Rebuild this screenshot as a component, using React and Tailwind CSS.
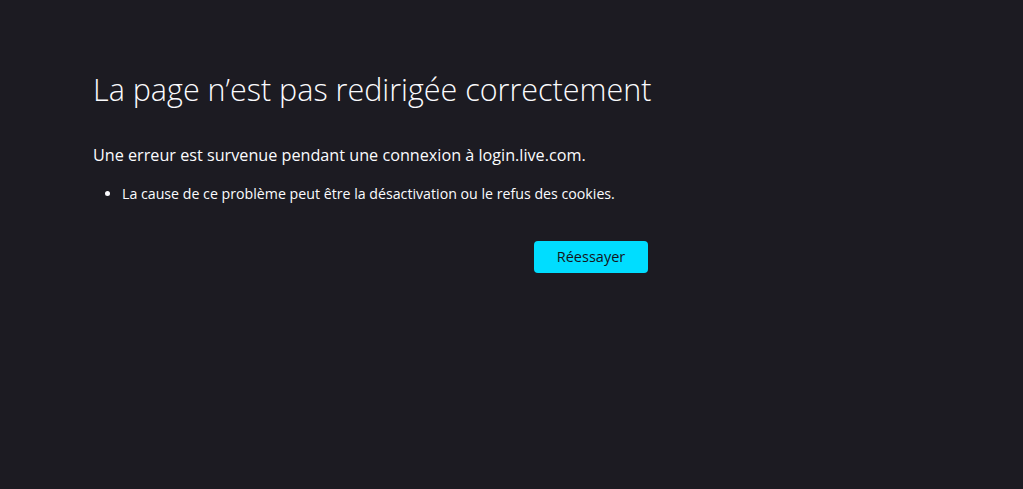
import React from 'react';

const App = () => {
  return (
    <div className="min-h-screen w-full bg-[#1c1b22] text-[#fbfbfe] font-['Open_Sans',sans-serif]">
      <div className="pl-[93px] pt-[67px]">
        <div className="w-[555px] flex flex-col">
          <h1 className="text-[30.5px] font-light leading-[44px] whitespace-nowrap">
            La page n’est pas redirigée correctement
          </h1>
          <p className="mt-[33px] text-[16.2px] leading-[22px]">
            Une erreur est survenue pendant une connexion à login.live.com.
          </p>
          <ul className="mt-[18px] pl-[29px] list-disc text-[14.2px] leading-[20px]">
            <li>La cause de ce problème peut être la désactivation ou le refus des cookies.</li>
          </ul>
          <div className="mt-[37px] flex justify-end">
            <button className="w-[114px] h-[32px] rounded-[4px] bg-[#00ddff] text-[#15141a] text-[14.5px]">
              Réessayer
            </button>
          </div>
        </div>
      </div>
    </div>
  );
};

export default App;
